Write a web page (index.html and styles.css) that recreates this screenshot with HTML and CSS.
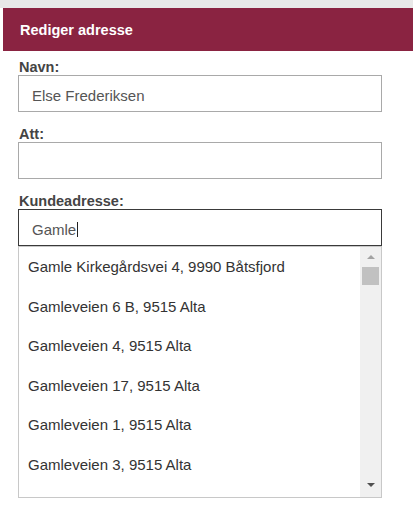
FILE: index.html
```html
<!DOCTYPE html>
<html lang="no">
<head>
<meta charset="utf-8">
<title>Rediger adresse</title>
<link rel="stylesheet" href="styles.css">
</head>
<body>
<div class="topbar"></div>
<div class="panel">
  <div class="panel-header">Rediger adresse</div>
  <form class="form">
    <div class="field">
      <label class="label">Navn:</label>
      <div class="input">Else Frederiksen</div>
    </div>
    <div class="field">
      <label class="label">Att:</label>
      <div class="input"></div>
    </div>
    <div class="field field-auto">
      <label class="label">Kundeadresse:</label>
      <div class="input input-focus">Gamle<span class="caret"></span></div>
      <div class="dropdown">
        <ul class="options">
          <li class="option">Gamle Kirkegårdsvei 4, 9990 Båtsfjord</li>
          <li class="option">Gamleveien 6 B, 9515 Alta</li>
          <li class="option">Gamleveien 4, 9515 Alta</li>
          <li class="option">Gamleveien 17, 9515 Alta</li>
          <li class="option">Gamleveien 1, 9515 Alta</li>
          <li class="option">Gamleveien 3, 9515 Alta</li>
        </ul>
        <div class="scrollbar">
          <div class="sb-btn sb-up"><span class="arrow-up"></span></div>
          <div class="sb-thumb"></div>
          <div class="sb-track"></div>
          <div class="sb-btn sb-down"><span class="arrow-down"></span></div>
        </div>
      </div>
    </div>
  </form>
</div>
</body>
</html>
```
FILE: styles.css
```css
* { box-sizing: border-box; }
html, body {
  margin: 0;
  padding: 0;
  background: #ffffff;
  font-family: "Liberation Sans", Arial, sans-serif;
  height: 505px;
  overflow: hidden;
}
.topbar {
  height: 8px;
  background: #e8e8e8;
}
.panel {
  margin-left: 3px;
}
.panel-header {
  height: 43px;
  background: #8a2341;
  color: #ffffff;
  font-weight: bold;
  font-size: 14.5px;
  display: flex;
  align-items: center;
  padding-left: 17px;
}
.form {
  padding: 8px 0 0 15px;
  margin: 0;
}
.field {
  display: flex;
  flex-direction: column;
  width: 364px;
  margin-bottom: 14px;
}
.field-auto {
  position: relative;
}
.label {
  font-size: 14.5px;
  font-weight: bold;
  color: #444444;
  line-height: 16px;
  padding-left: 1px;
}
.input {
  height: 37px;
  border: 1px solid #a9a9a9;
  padding: 4px 13px 0;
  font-size: 15px;
  line-height: 31px;
  color: #555555;
  white-space: nowrap;
}
.input-focus {
  border-color: #3a3a3a;
}
.caret {
  display: inline-block;
  width: 1px;
  height: 15px;
  background: #222222;
  vertical-align: -2px;
  margin-left: 1px;
}
.dropdown {
  position: absolute;
  top: 100%;
  left: 0;
  width: 364px;
  height: 252px;
  background: #ffffff;
  border: 1px solid #c8c8c8;
  display: flex;
  z-index: 2;
}
.options {
  list-style: none;
  margin: 0;
  padding: 0;
  flex: 1;
  overflow: hidden;
}
.option {
  height: 39.5px;
  padding: 0 9px;
  display: flex;
  align-items: center;
  font-size: 15px;
  color: #333333;
  white-space: nowrap;
}
.scrollbar {
  width: 21px;
  background: #f0f0f0;
  display: flex;
  flex-direction: column;
}
.sb-btn {
  height: 20px;
  display: flex;
  align-items: center;
  justify-content: center;
}
.sb-down {
  align-items: flex-start;
  padding-top: 6px;
}
.arrow-up {
  width: 0;
  height: 0;
  border-left: 4px solid transparent;
  border-right: 4px solid transparent;
  border-bottom: 4px solid #a3a3a3;
}
.arrow-down {
  width: 0;
  height: 0;
  border-left: 4px solid transparent;
  border-right: 4px solid transparent;
  border-top: 4px solid #505050;
}
.sb-thumb {
  height: 18px;
  margin: 0 2px;
  background: #c1c1c1;
}
.sb-track {
  flex: 1;
}
```
